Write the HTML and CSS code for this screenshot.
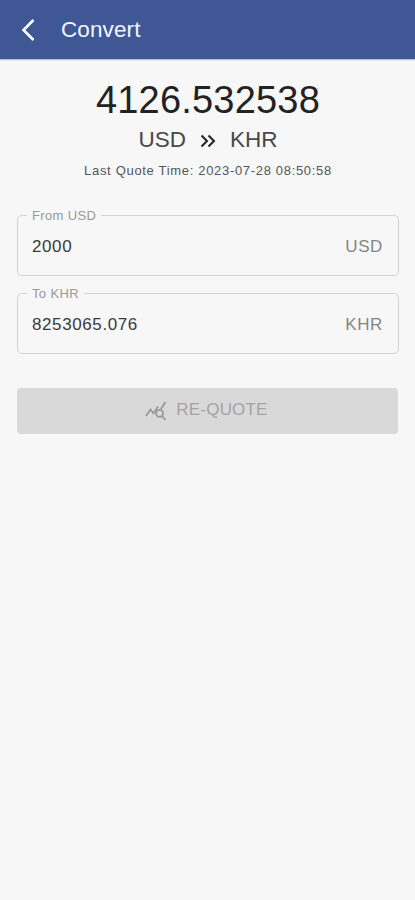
FILE: index.html
```html
<!DOCTYPE html>
<html lang="en">
<head>
	<meta charset="UTF-8">
	<title>Convert</title>
	<link rel="stylesheet" href="styles.css">
</head>
<body>
<header class="topbar">
	<svg class="back" width="14" height="24" viewBox="0 0 14 24"><path d="M12.5 2 L2.5 12 L12.5 22"/></svg>
	<h1 class="title">Convert</h1>
</header>
<main class="content">
	<div class="rate">4126.532538</div>
	<div class="pair">
		<span>USD</span>
		<svg class="arrows" width="16" height="14" viewBox="0 0 16 14"><path d="M1.5 1.5 L7 7 L1.5 12.5 M8.5 1.5 L14 7 L8.5 12.5"/></svg>
		<span>KHR</span>
	</div>
	<div class="time">Last Quote Time: 2023-07-28 08:50:58</div>

	<fieldset class="field">
		<legend>From USD</legend>
		<div class="row"><span class="value">2000</span><span class="unit">USD</span></div>
	</fieldset>
	<fieldset class="field">
		<legend>To KHR</legend>
		<div class="row"><span class="value">8253065.076</span><span class="unit">KHR</span></div>
	</fieldset>

	<button class="requote" disabled>
		<svg class="chart" width="22" height="20" viewBox="0 0 22 20"><path d="M1 15 L5.5 8.5 L8.5 12.5 L13 5.5 M16 8 L20.5 1"/><circle cx="14.6" cy="12.3" r="3.5"/><path d="M17 15 L20.5 19"/></svg>
		<span>RE-QUOTE</span>
	</button>
</main>
</body>
</html>
```

FILE: styles.css
```css
body,h1,fieldset,legend {margin:0; padding:0;}
body {background:#f7f7f7; color:#222; font-family:"Liberation Sans", Arial, sans-serif;}
svg {display:block; fill:none; flex:none;}

.topbar {display:flex; align-items:center; height:59px; padding-left:21px; background:#3f5795; box-shadow:0 1px 1px #b9c1d6;}
.back {stroke:#fff; stroke-width:2.6;}
.title {margin-left:26px; font-size:22.5px; font-weight:400; line-height:26px; letter-spacing:.1px; color:#f2f5ff;}

.content {padding:19px 16px 0 17px;}
.rate {font-size:38px; line-height:44px; letter-spacing:.2px; text-align:center;}
.pair {display:flex; justify-content:center; align-items:center; height:36px; font-size:22.5px; color:#484848;}
.arrows {margin:2px 14px 0; stroke:#222; stroke-width:2;}
.time {height:26px; font-size:13px; line-height:26px; letter-spacing:.68px; text-align:center; color:#555;}

.field {box-sizing:border-box; height:69px; margin-top:23px; padding:0 15px 0 14px; border:1.5px solid #d3d3d3; border-radius:5px;}
.field + .field {margin-top:9px;}
.field legend {margin-left:-5px; padding:0 5px; font-size:13px; line-height:17px; letter-spacing:.35px; color:#999;}
.row {display:flex; justify-content:space-between; align-items:center; height:45px; font-size:17px; letter-spacing:.6px;}
.value {color:#3a3a3a;}
.unit {color:#858585;}

.requote {display:flex; justify-content:center; align-items:center; gap:9px; width:381px; height:46px; margin-top:34px; padding:0 2px 3px 0; border:0; border-radius:4px; background:#d9d9d9; color:#a3a3a3; font:17px "Liberation Sans", Arial, sans-serif; letter-spacing:.2px;}
.chart {margin-top:3px; stroke:#999; stroke-width:1.8;}
```
